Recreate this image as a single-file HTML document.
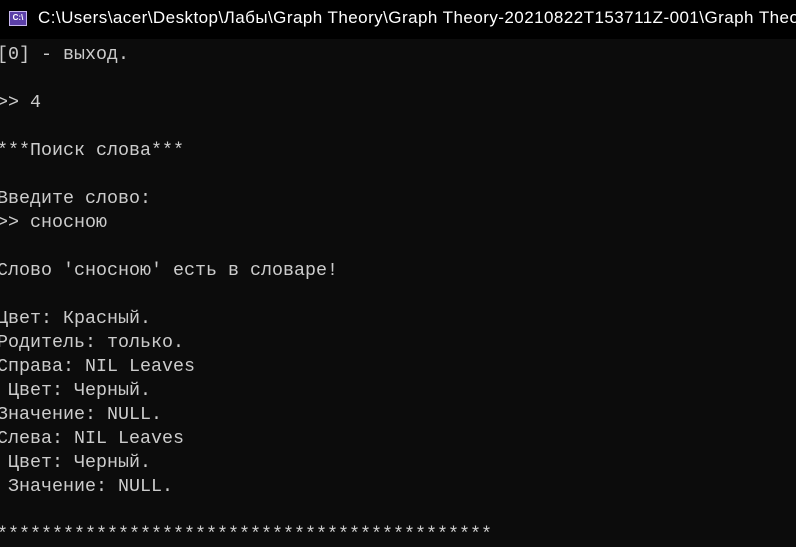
<!DOCTYPE html>
<html><head><meta charset="utf-8"><style>
html,body{margin:0;padding:0;width:796px;height:544px;overflow:hidden;background:#0c0c0c}
#t{position:absolute;left:0;top:0;width:796px;height:39px;background:#000;overflow:hidden}
#ic{position:absolute;left:9px;top:11px;width:18px;height:15px;background:#5b3fa8;border:1px solid #c8b8f0;box-sizing:border-box;font:bold 8px "Liberation Sans",sans-serif;color:#fff;line-height:12px;text-align:center}
#tt{position:absolute;left:38px;top:8px;white-space:nowrap;color:#fff;font:17px "Liberation Sans","DejaVu Sans",sans-serif;letter-spacing:0.45px}
#c{position:absolute;left:-3px;top:43px;margin:0;color:#cccccc;font:18.33px/24px "Liberation Mono","DejaVu Sans Mono",monospace;white-space:pre}
</style></head><body>
<div id="t"><div id="ic">C:\</div><div id="tt">C:\Users\acer\Desktop\Лабы\Graph Theory\Graph Theory-20210822T153711Z-001\Graph Theory</div></div>
<pre id="c">[0] - выход.

>> 4

***Поиск слова***

Введите слово:
>> сносною

Слово 'сносною' есть в словаре!

Цвет: Красный.
Родитель: только.
Справа: NIL Leaves
 Цвет: Черный.
Значение: NULL.
Слева: NIL Leaves
 Цвет: Черный.
 Значение: NULL.

*********************************************</pre>
</body></html>
